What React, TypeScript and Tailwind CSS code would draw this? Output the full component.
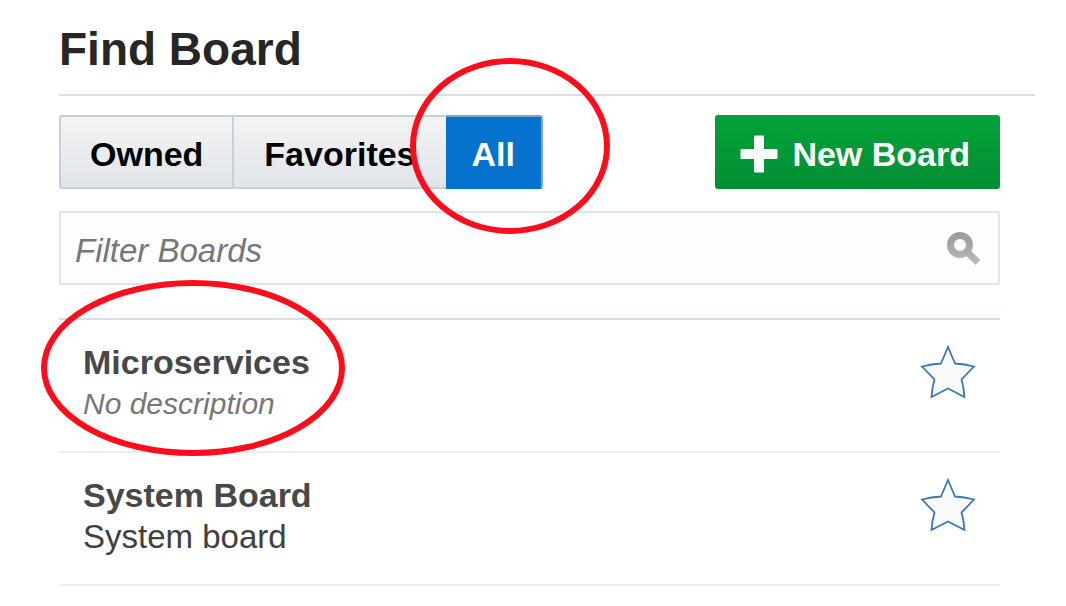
import { useState } from "react";

const tabs = ["Owned", "Favorites", "All"];

const boards = [
  { name: "Microservices", description: "", circled: true },
  { name: "System Board", description: "System board", circled: false },
];

function TabMark() {
  return (
    <svg
      className="pointer-events-none absolute -top-[57px] -left-[36px] z-10 h-[176px] w-[200px]"
      viewBox="0 0 200 176"
      fill="none"
      aria-hidden="true"
    >
      <ellipse cx="100" cy="88" rx="97" ry="85" stroke="#fd0d1b" strokeWidth="6" />
    </svg>
  );
}

function BoardMark() {
  return (
    <svg
      className="pointer-events-none absolute -top-[40px] -left-[18px] z-10 h-[176px] w-[304px]"
      viewBox="0 0 304 176"
      fill="none"
      aria-hidden="true"
    >
      <ellipse cx="152" cy="88" rx="149" ry="85" stroke="#fd0d1b" strokeWidth="6" />
    </svg>
  );
}

function Star() {
  return (
    <svg className="h-[54px] w-[56px]" viewBox="0 0 56 54" aria-hidden="true">
      <path
        d="M28 2 L35 18.5 Q45 19 54 21.5 L41.5 34.5 Q44 43 44.500 52 L28 43.5 L11.5 52 Q12 43 14.5 34.5 L2 21.5 Q11 19 21 18.5 Z"
        fill="#fafafa"
        stroke="#3b78b5"
        strokeWidth="1.8"
      />
    </svg>
  );
}

export default function App() {
  const [active, setActive] = useState("All");
  const [filter, setFilter] = useState("");

  return (
    <main className="min-h-screen overflow-x-clip bg-white pt-[23px] pr-[31px] pl-[59px] font-['Liberation_Sans',sans-serif]">
      <h1 className="border-b-2 border-[#dbdfe3] pb-[18px] text-[46px] leading-[53px] font-bold text-[#262626]">
        Find Board
      </h1>

      <div className="pr-[35px]">
        <div className="flex items-start justify-between pt-[19px]">
          <div className="flex h-[74px]">
            {tabs.map((tab) => (
              <div key={tab} className="relative flex">
                <button
                  type="button"
                  aria-pressed={active === tab}
                  onClick={() => setActive(tab)}
                  className={
                    active === tab
                      ? "rounded-r-[3px] border-y-2 border-r-2 border-t-[#78aada] border-r-[#78aada] border-b-[#0572ce] bg-[#0572ce] px-[26px] pt-1 text-[34px] font-bold text-white"
                      : tab === "Owned"
                        ? "rounded-l-[3px] border-2 border-[#c4d0da] bg-linear-to-b from-[#f2f3f4] to-[#e1e5e9] px-[29px] pt-1 text-[34px] font-bold text-black"
                        : "border-y-2 border-[#c4d0da] bg-linear-to-b from-[#f2f3f4] to-[#e1e5e9] px-[30px] pt-1 text-[34px] font-bold text-black"
                  }
                >
                  {tab}
                </button>
                {tab === "All" && <TabMark />}
              </div>
            ))}
          </div>

          <button
            type="button"
            className="flex h-[74px] items-center gap-[14px] rounded-[3px] bg-linear-to-b from-[#03a23a] to-[#038e33] pt-1 pr-[30px] pl-[25px] text-[34px] font-bold text-white"
          >
            <svg className="h-[38px] w-[38px]" viewBox="0 0 38 38" aria-hidden="true">
              <path
                d="M15 0.5h8q1 0 1 1V14h12.500q1 0 1 1v8q0 1-1 1H24v12.500q0 1-1 1h-8q-1 0-1-1V24H1.500q-1 0-1-1v-8q0-1 1-1H14V1.500q0-1 1-1Z"
                fill="#fff"
              />
            </svg>
            <span>New Board</span>
          </button>
        </div>

        <label className="mt-[22px] flex h-[74px] items-center rounded-[3px] border-2 border-[#dfe4e8] bg-[#fcfdff] pr-[17px] pl-[14px]">
          <input
            type="text"
            aria-label="Filter Boards"
            placeholder="Filter Boards"
            value={filter}
            onChange={(e) => setFilter(e.target.value)}
            className="h-full min-w-0 flex-1 bg-transparent pt-[6px] text-[33px] text-[#333] italic outline-none placeholder:text-[#777]"
          />
          <svg className="h-[36px] w-[36px]" viewBox="0 0 36 36" fill="none" aria-hidden="true">
            <defs>
              <linearGradient id="lens" x1="0" y1="0" x2="0" y2="36" gradientUnits="userSpaceOnUse">
                <stop stopColor="#979797" />
                <stop offset="1" stopColor="#bcbcbc" />
              </linearGradient>
            </defs>
            <circle cx="15" cy="15" r="9.500" stroke="url(#lens)" strokeWidth="7" />
            <path d="M21.500 21.500 L33 32.500" stroke="url(#lens)" strokeWidth="7" />
          </svg>
        </label>

        <ul className="mt-[33px] border-t-2 border-[#d5dfe7]">
          {boards
            .filter((b) => b.name.toLowerCase().includes(filter.toLowerCase()))
            .map((board) => (
              <li
                key={board.name}
                className="relative flex justify-between border-b-2 border-[#eeeeee] px-[24px] pt-[22px] pb-[25px]"
              >
                {board.circled && <BoardMark />}
                <div>
                  <h2 className="text-[34px] leading-[40px] font-bold text-[#484848]">{board.name}</h2>
                  {board.description ? (
                    <p className="text-[33px] leading-[44px] text-[#404040]">{board.description}</p>
                  ) : (
                    <p className="text-[30px] leading-[44px] text-[#777] italic">No description</p>
                  )}
                </div>
                <button type="button" aria-label={`Add ${board.name} to favorites`} className="mt-[3px] self-start">
                  <Star />
                </button>
              </li>
            ))}
        </ul>
      </div>
    </main>
  );
}
